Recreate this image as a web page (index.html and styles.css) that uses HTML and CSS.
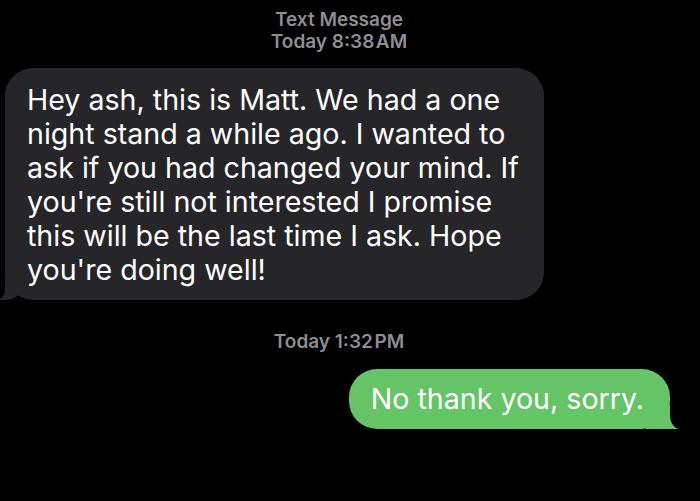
FILE: index.html
```html
<!DOCTYPE html>
<html lang="en">
<head>
<meta charset="utf-8">
<title>Text Message</title>
<link rel="stylesheet" href="styles.css">
</head>
<body>
<main class="thread">
  <header class="stamp stamp-top">
    <div class="stamp-line">Text Message</div>
    <div class="stamp-line">Today 8:38&#8202;AM</div>
  </header>
  <div class="row row-in">
    <p class="bubble bubble-in">Hey ash, this is Matt. We had a one night stand a while ago. I wanted to ask if you had changed your mind. If you're still not interested I promise this will be the last time I ask. Hope you're doing well!</p>
  </div>
  <div class="stamp stamp-mid">
    <div class="stamp-line">Today 1:32&#8202;PM</div>
  </div>
  <div class="row row-out">
    <p class="bubble bubble-out">No thank you, sorry.</p>
  </div>
</main>
</body>
</html>
```

FILE: styles.css
```css
html, body {
  margin: 0;
  padding: 0;
  background: #000;
}
body {
  width: 700px;
  height: 501px;
  overflow: hidden;
  font-family: "Inter", "Noto Sans", sans-serif;
  -webkit-font-smoothing: antialiased;
}
.thread {
  display: flex;
  flex-direction: column;
}
.stamp {
  text-align: center;
  color: #8d8d92;
  font-size: 19px;
  font-weight: 600;
  line-height: 22px;
  padding-right: 22px;
}
.stamp-top {
  padding-top: 9px;
}
.stamp-mid {
  margin-top: 31px;
}
.row {
  display: flex;
}
.row-in {
  justify-content: flex-start;
  padding-left: 5px;
  margin-top: 15px;
}
.row-out {
  justify-content: flex-end;
  padding-right: 30px;
  margin-top: 16px;
}
.bubble {
  position: relative;
  margin: 0;
  color: #fff;
  font-size: 28.6px;
  line-height: 34px;
  font-weight: 400;
  border-radius: 28px;
}
.bubble-in {
  width: 539px;
  box-sizing: border-box;
  background: #262628;
  padding: 15px 16px 13px 22px;
}
.bubble-out {
  background: #65c466;
  padding: 13px 26px 13px 22px;
}
.bubble::before,
.bubble::after {
  content: "";
  position: absolute;
  bottom: 0;
  height: 24px;
}
.bubble-in::before {
  left: -5px;
  width: 22px;
  background: #262628;
  border-bottom-right-radius: 16px 14px;
}
.bubble-in::after {
  left: -12px;
  width: 12px;
  background: #000;
  border-bottom-right-radius: 10px;
}
.bubble-out::before {
  right: -10px;
  width: 34px;
  background: #65c466;
}
.bubble-out::after {
  right: -10px;
  width: 10px;
  background: #000;
  border-bottom-left-radius: 10px 14px;
}
```
